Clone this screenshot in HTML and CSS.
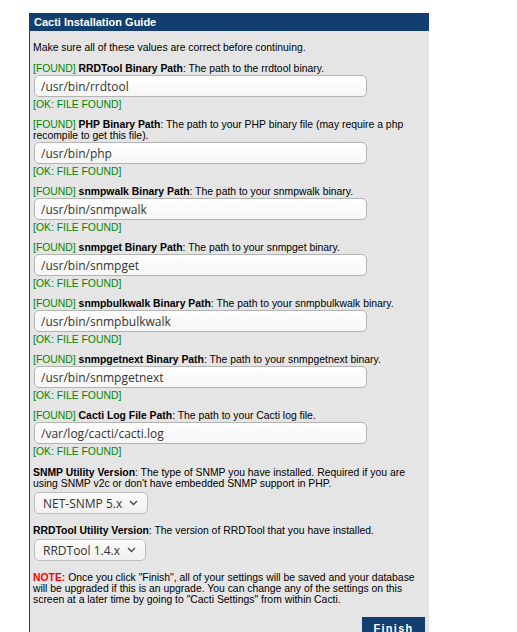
FILE: index.html
```html
<!DOCTYPE html>
<html>
<head>
<meta charset="utf-8">
<title>Cacti Installation Guide</title>
<link rel="stylesheet" href="styles.css">
</head>
<body>
<div class="guide">
  <div class="guide-header">Cacti Installation Guide</div>
  <div class="guide-body">
    <p class="intro">Make sure all of these values are correct before continuing.</p>

    <div class="field">
      <div class="label"><span class="found">[FOUND]</span> <b>RRDTool Binary Path</b>: The path to the rrdtool binary.</div>
      <input class="path" type="text" value="/usr/bin/rrdtool">
      <div class="ok">[OK: FILE FOUND]</div>
    </div>

    <div class="field">
      <div class="label"><span class="found">[FOUND]</span> <b>PHP Binary Path</b>: The path to your PHP binary file (may require a php recompile to get this file).</div>
      <input class="path" type="text" value="/usr/bin/php">
      <div class="ok">[OK: FILE FOUND]</div>
    </div>

    <div class="field">
      <div class="label"><span class="found">[FOUND]</span> <b>snmpwalk Binary Path</b>: The path to your snmpwalk binary.</div>
      <input class="path" type="text" value="/usr/bin/snmpwalk">
      <div class="ok">[OK: FILE FOUND]</div>
    </div>

    <div class="field">
      <div class="label"><span class="found">[FOUND]</span> <b>snmpget Binary Path</b>: The path to your snmpget binary.</div>
      <input class="path" type="text" value="/usr/bin/snmpget">
      <div class="ok">[OK: FILE FOUND]</div>
    </div>

    <div class="field">
      <div class="label"><span class="found">[FOUND]</span> <b>snmpbulkwalk Binary Path</b>: The path to your snmpbulkwalk binary.</div>
      <input class="path" type="text" value="/usr/bin/snmpbulkwalk">
      <div class="ok">[OK: FILE FOUND]</div>
    </div>

    <div class="field">
      <div class="label"><span class="found">[FOUND]</span> <b>snmpgetnext Binary Path</b>: The path to your snmpgetnext binary.</div>
      <input class="path" type="text" value="/usr/bin/snmpgetnext">
      <div class="ok">[OK: FILE FOUND]</div>
    </div>

    <div class="field">
      <div class="label"><span class="found">[FOUND]</span> <b>Cacti Log File Path</b>: The path to your Cacti log file.</div>
      <input class="path" type="text" value="/var/log/cacti/cacti.log">
      <div class="ok">[OK: FILE FOUND]</div>
    </div>

    <div class="field select-field">
      <div class="label"><b>SNMP Utility Version</b>: The type of SNMP you have installed. Required if you are using SNMP v2c or don't have embedded SNMP support in PHP.</div>
      <div class="select"><span>NET-SNMP 5.x</span><svg class="chev" width="9" height="6" viewBox="0 0 9 6"><path d="M1 1 L4.5 4.5 L8 1" fill="none" stroke="#444" stroke-width="1.3"/></svg></div>
    </div>

    <div class="field select-field">
      <div class="label"><b>RRDTool Utility Version</b>: The version of RRDTool that you have installed.</div>
      <div class="select"><span>RRDTool 1.4.x</span><svg class="chev" width="9" height="6" viewBox="0 0 9 6"><path d="M1 1 L4.5 4.5 L8 1" fill="none" stroke="#444" stroke-width="1.3"/></svg></div>
    </div>

    <p class="note"><span class="note-tag">NOTE:</span> Once you click "Finish", all of your settings will be saved and your database will be upgraded if this is an upgrade. You can change any of the settings on this screen at a later time by going to "Cacti Settings" from within Cacti.</p>

    <div class="actions"><button class="finish" type="button">Finish</button></div>
  </div>
</div>
</body>
</html>
```
FILE: styles.css
```css
html, body {
  margin: 0;
  padding: 0;
  background: #fff;
}
body {
  padding: 13px 0 0 29px;
  font-family: "Liberation Sans", Arial, sans-serif;
  font-size: 10.4px;
  color: #000;
}
.guide {
  width: 400px;
}
.guide-header {
  background: #123f70;
  color: #fff;
  font-weight: bold;
  font-size: 11px;
  height: 18px;
  line-height: 18px;
  padding-left: 5px;
}
.guide-body {
  background: #e5e5e5;
  border-left: 1px solid #123f70;
  padding: 11px 4px 0 3px;
  height: 620px;
}
.intro {
  margin: 0 0 10px 0;
  line-height: 11px;
}
.field {
  margin-bottom: 9px;
}
.label {
  line-height: 11px;
  padding-right: 6px;
}
.found {
  color: #008800;
}
.path {
  display: block;
  box-sizing: border-box;
  width: 333px;
  height: 22px;
  margin: 1px 0 2px 1px;
  padding: 0 6px;
  border: 1px solid #b4b4b4;
  border-radius: 5px;
  background: linear-gradient(#ffffff, #f6f6f6);
  font-family: "Open Sans", "DejaVu Sans", sans-serif;
  font-size: 12px;
  color: #333;
  outline: none;
}
.ok {
  color: #008800;
  line-height: 11px;
}
.field + .select-field {
  margin-top: 10px;
}
.select-field + .select-field {
  margin-top: 0;
}
.select-field {
  margin-bottom: 11px;
}
.select {
  display: flex;
  width: fit-content;
  align-items: center;
  gap: 7px;
  box-sizing: border-box;
  height: 22px;
  margin: 3px 0 0 1px;
  padding: 0 9px 0 8px;
  border: 1px solid #bdbdbd;
  border-radius: 5px;
  background: linear-gradient(#fbfbfb, #f1f1f1);
  font-family: "Open Sans", "DejaVu Sans", sans-serif;
  font-size: 12px;
  color: #333;
  white-space: nowrap;
}
.chev { display: block; }
.note {
  margin: 0;
  line-height: 11px;
  padding-right: 0;
}
.note-tag {
  color: #ff0000;
  font-weight: bold;
}
.actions {
  display: flex;
  justify-content: flex-end;
  margin-top: 12px;
}
.finish {
  background: #123f70;
  color: #fff;
  border: 0;
  width: 63px;
  height: 21px;
  font-family: "Liberation Sans", Arial, sans-serif;
  font-weight: bold;
  font-size: 11px;
  letter-spacing: 1.3px;
  padding: 0;
}
```
